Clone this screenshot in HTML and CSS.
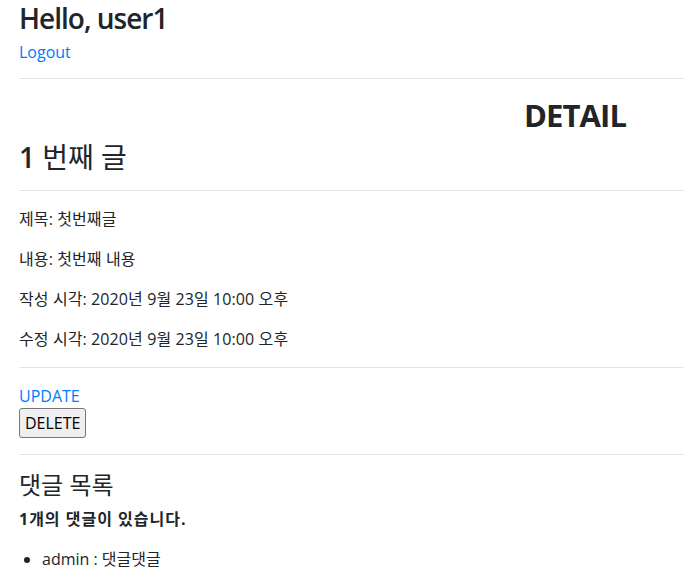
FILE: index.html
```html
<!DOCTYPE html>
<html lang="ko">
<head>
<meta charset="utf-8">
<title>Detail</title>
<link rel="stylesheet" href="styles.css">
</head>
<body>
<div class="page">
  <h3 class="hello">Hello, user1</h3>
  <a class="link logout" href="#">Logout</a>
  <hr class="rule rule-top">
  <div class="title-row"><h2 class="detail-title">DETAIL</h2></div>
  <h3 class="post-num"><span class="num">1</span> 번째 글</h3>
  <hr class="rule">
  <p class="field">제목: 첫번째글</p>
  <p class="field">내용: 첫번째 내용</p>
  <p class="field">작성 시각: 2020년 9월 23일 10:00 오후</p>
  <p class="field">수정 시각: 2020년 9월 23일 10:00 오후</p>
  <hr class="rule">
  <a class="link" href="#">UPDATE</a>
  <form class="delete-form"><button type="button" class="btn-delete">DELETE</button></form>
  <hr class="rule">
  <h4 class="comments-title">댓글 목록</h4>
  <p class="count"><strong>1개의 댓글이 있습니다.</strong></p>
  <ul class="comments">
    <li>admin : 댓글댓글</li>
  </ul>
</div>
</body>
</html>
```

FILE: styles.css
```css
html, body {
  margin: 0;
  padding: 0;
  background: #fff;
}
body {
  font-family: "Open Sans", "Noto Sans CJK KR", sans-serif;
  font-size: 16px;
  line-height: 24px;
  color: #212529;
}
.page {
  padding: 2px 0 0 19px;
}
.hello {
  margin: 0 0 4px;
  font-size: 28px;
  line-height: 33.6px;
  font-weight: 600;
  letter-spacing: -1px;
}
.link {
  color: #007bff;
  text-decoration: none;
  display: block;
  width: max-content;
}
.rule {
  margin: 16px 0;
  border: 0;
  border-top: 1px solid rgba(0, 0, 0, 0.1);
}
.rule-top {
  margin-top: 14px;
}
.title-row {
  padding-left: 505px;
}
.detail-title {
  margin: 0;
  padding-top: 2px;
  font-size: 31px;
  line-height: 36.4px;
  font-weight: 700;
  letter-spacing: -0.9px;
}
.post-num {
  margin: 8px 0 0;
  font-size: 28px;
  line-height: 32.6px;
  font-weight: 400;
}
.num {
  font-weight: 600;
}
.field {
  margin: 0 0 16px;
  letter-spacing: 0.1px;
}
.delete-form {
  margin: 0;
}
.btn-delete {
  font-family: inherit;
  font-size: 16px;
  line-height: 24px;
  color: #000;
  background: #efefef;
  border: 1px solid #767676;
  border-radius: 3px;
  padding: 2px 5px;
  margin: 0;
}
.comments-title {
  margin: 0 0 8px;
  font-size: 24px;
  line-height: 28.8px;
  font-weight: 400;
}
.count {
  margin: 0 0 16px;
}
.count strong {
  font-weight: 700;
  letter-spacing: 1px;
}
.comments {
  margin: 0;
  padding-left: 23px;
}
```
